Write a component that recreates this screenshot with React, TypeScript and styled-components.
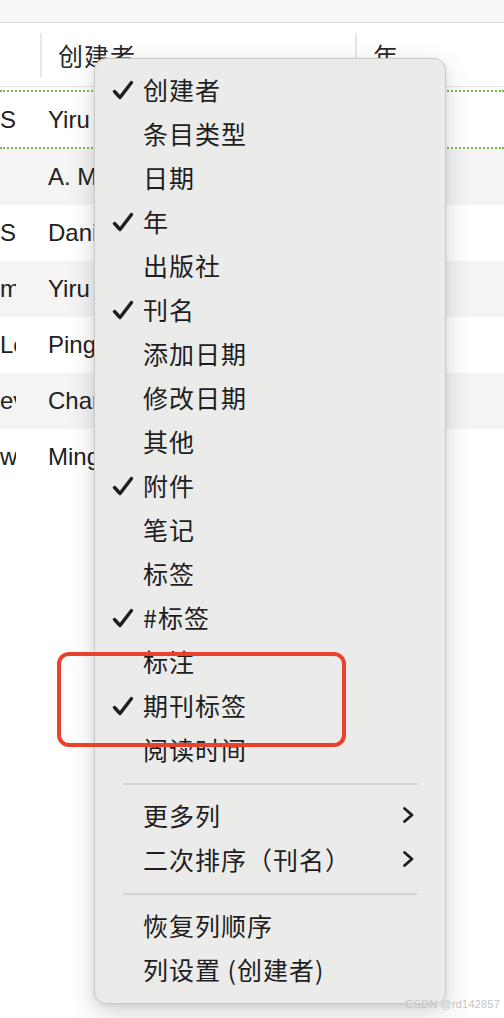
import React from "react";
import styled, { createGlobalStyle } from "styled-components";

const GlobalStyle = createGlobalStyle`
  html, body {
    margin: 0;
    padding: 0;
    background: #ffffff;
  }
  body {
    font-family: "Noto Sans", "Noto Sans CJK SC", sans-serif;
    color: #222;
  }
`;

const Page = styled.div`
  position: relative;
  width: 504px;
  height: 1018px;
  overflow: hidden;
  background: #fff;
`;

const TopBar = styled.div`
  height: 22px;
  background: #f7f7f7;
  border-bottom: 1px solid #dadada;
`;

const HeaderRow = styled.div`
  display: grid;
  grid-template-columns: 40px 315px 1fr;
  align-items: center;
  height: 63px;
  border-bottom: 1px solid #e4e4e4;
`;

const HeaderCell = styled.div<{ $divider?: boolean }>`
  height: 44px;
  display: flex;
  align-items: center;
  padding-left: 16px;
  border-left: ${(p) => (p.$divider ? "2px solid #e6e6e6" : "none")};
  font-family: "Noto Sans CJK SC", sans-serif;
  font-size: 25px;
  letter-spacing: 1px;
  color: #2a2a2a;
  white-space: nowrap;
  overflow: hidden;
`;

const Rows = styled.div`
  display: flex;
  flex-direction: column;
  padding-top: 3px;
`;

const Row = styled.div<{ $alt?: boolean; $selected?: boolean }>`
  display: grid;
  grid-template-columns: 40px 1fr;
  align-items: center;
  height: ${(p) => (p.$selected ? "55px" : "56px")};
  background: ${(p) => (p.$alt ? "#f4f4f4" : "#fff")};
  border-top: ${(p) => (p.$selected ? "2px dotted #7cb84e" : "none")};
  border-bottom: ${(p) => (p.$selected ? "2px dotted #7cb84e" : "none")};
  font-family: "Liberation Sans", "Noto Sans", sans-serif;
  font-size: 24px;
  color: #222;
`;

const ClipCell = styled.div`
  width: 16px;
  overflow: hidden;
  white-space: nowrap;
`;

const NameCell = styled.div`
  padding-left: 8px;
  white-space: nowrap;
`;

const Menu = styled.div`
  position: absolute;
  left: 94px;
  top: 58px;
  width: 352px;
  box-sizing: border-box;
  padding: 10px 0 10px;
  background: #ebebea;
  border: 1px solid #c9c9c9;
  border-radius: 12px;
  box-shadow: 0 10px 28px rgba(0, 0, 0, 0.16), 0 2px 6px rgba(0, 0, 0, 0.08);
`;

const Item = styled.div`
  position: relative;
  display: flex;
  align-items: center;
  height: 44px;
  box-sizing: border-box;
  padding: 0 30px 4px 48px;
  font-family: "Noto Sans CJK SC", sans-serif;
  font-size: 25px;
  letter-spacing: 1px;
  color: #1e1e1e;
  white-space: nowrap;
`;

const Label = styled.span`
  flex: 1;
`;

const CheckMark = styled.svg`
  position: absolute;
  left: 17px;
  top: 11px;
`;

const Separator = styled.div`
  height: 2px;
  margin: 10px 28px 10px 28px;
  background: #d4d4d3;
`;

const Highlight = styled.div`
  position: absolute;
  left: 57px;
  top: 652px;
  width: 289px;
  height: 95px;
  box-sizing: border-box;
  border: 4px solid #e8412c;
  border-radius: 12px;
`;

const Watermark = styled.div`
  position: absolute;
  right: 4px;
  bottom: 8px;
  font-family: "Liberation Sans", sans-serif;
  font-size: 11px;
  color: #c4c4c4;
  letter-spacing: 0.2px;
`;

function Check() {
  return (
    <CheckMark width="22" height="22" viewBox="0 0 22 22">
      <path
        d="M2.5 11.5 L8 17.5 L19.5 2.5"
        fill="none"
        stroke="#1e1e1e"
        strokeWidth="3.4"
        strokeLinecap="round"
        strokeLinejoin="round"
      />
    </CheckMark>
  );
}

function Chevron() {
  return (
    <svg width="14" height="18" viewBox="0 0 14 18">
      <path
        d="M3.5 2.5 L11 9 L3.5 15.5"
        fill="none"
        stroke="#1e1e1e"
        strokeWidth="2.8"
        strokeLinecap="round"
        strokeLinejoin="round"
      />
    </svg>
  );
}

type MenuEntry = { label: string; checked?: boolean; submenu?: boolean };

const columns: MenuEntry[] = [
  { label: "创建者", checked: true },
  { label: "条目类型" },
  { label: "日期" },
  { label: "年", checked: true },
  { label: "出版社" },
  { label: "刊名", checked: true },
  { label: "添加日期" },
  { label: "修改日期" },
  { label: "其他" },
  { label: "附件", checked: true },
  { label: "笔记" },
  { label: "标签" },
  { label: "#标签", checked: true },
  { label: "标注" },
  { label: "期刊标签", checked: true },
  { label: "阅读时间" },
];

const more: MenuEntry[] = [
  { label: "更多列", submenu: true },
  { label: "二次排序（刊名）", submenu: true },
];

const settings: MenuEntry[] = [
  { label: "恢复列顺序" },
  { label: "列设置 (创建者)" },
];

const rows = [
  { clip: "S", name: "Yiru Wang" },
  { clip: "", name: "A. Mehta" },
  { clip: "S", name: "Daniel Lee" },
  { clip: "m", name: "Yiru Wang" },
  { clip: "Le", name: "Ping Zhou" },
  { clip: "ev", name: "Chang Liu" },
  { clip: "wi", name: "Ming Chen" },
];

function MenuItem({ entry }: { entry: MenuEntry }) {
  return (
    <Item>
      {entry.checked && <Check />}
      <Label>{entry.label}</Label>
      {entry.submenu && <Chevron />}
    </Item>
  );
}

export default function App() {
  return (
    <>
      <GlobalStyle />
      <Page>
        <TopBar />
        <HeaderRow>
          <HeaderCell />
          <HeaderCell $divider>创建者</HeaderCell>
          <HeaderCell $divider>年</HeaderCell>
        </HeaderRow>
        <Rows>
          {rows.map((r, i) => (
            <Row key={i} $alt={i % 2 === 1} $selected={i === 0}>
              <ClipCell>{r.clip}</ClipCell>
              <NameCell>{r.name}</NameCell>
            </Row>
          ))}
        </Rows>

        <Menu>
          {columns.map((c) => (
            <MenuItem key={c.label} entry={c} />
          ))}
          <Separator />
          {more.map((c) => (
            <MenuItem key={c.label} entry={c} />
          ))}
          <Separator />
          {settings.map((c) => (
            <MenuItem key={c.label} entry={c} />
          ))}
        </Menu>

        <Highlight />
        <Watermark>CSDN @rd142857</Watermark>
      </Page>
    </>
  );
}
